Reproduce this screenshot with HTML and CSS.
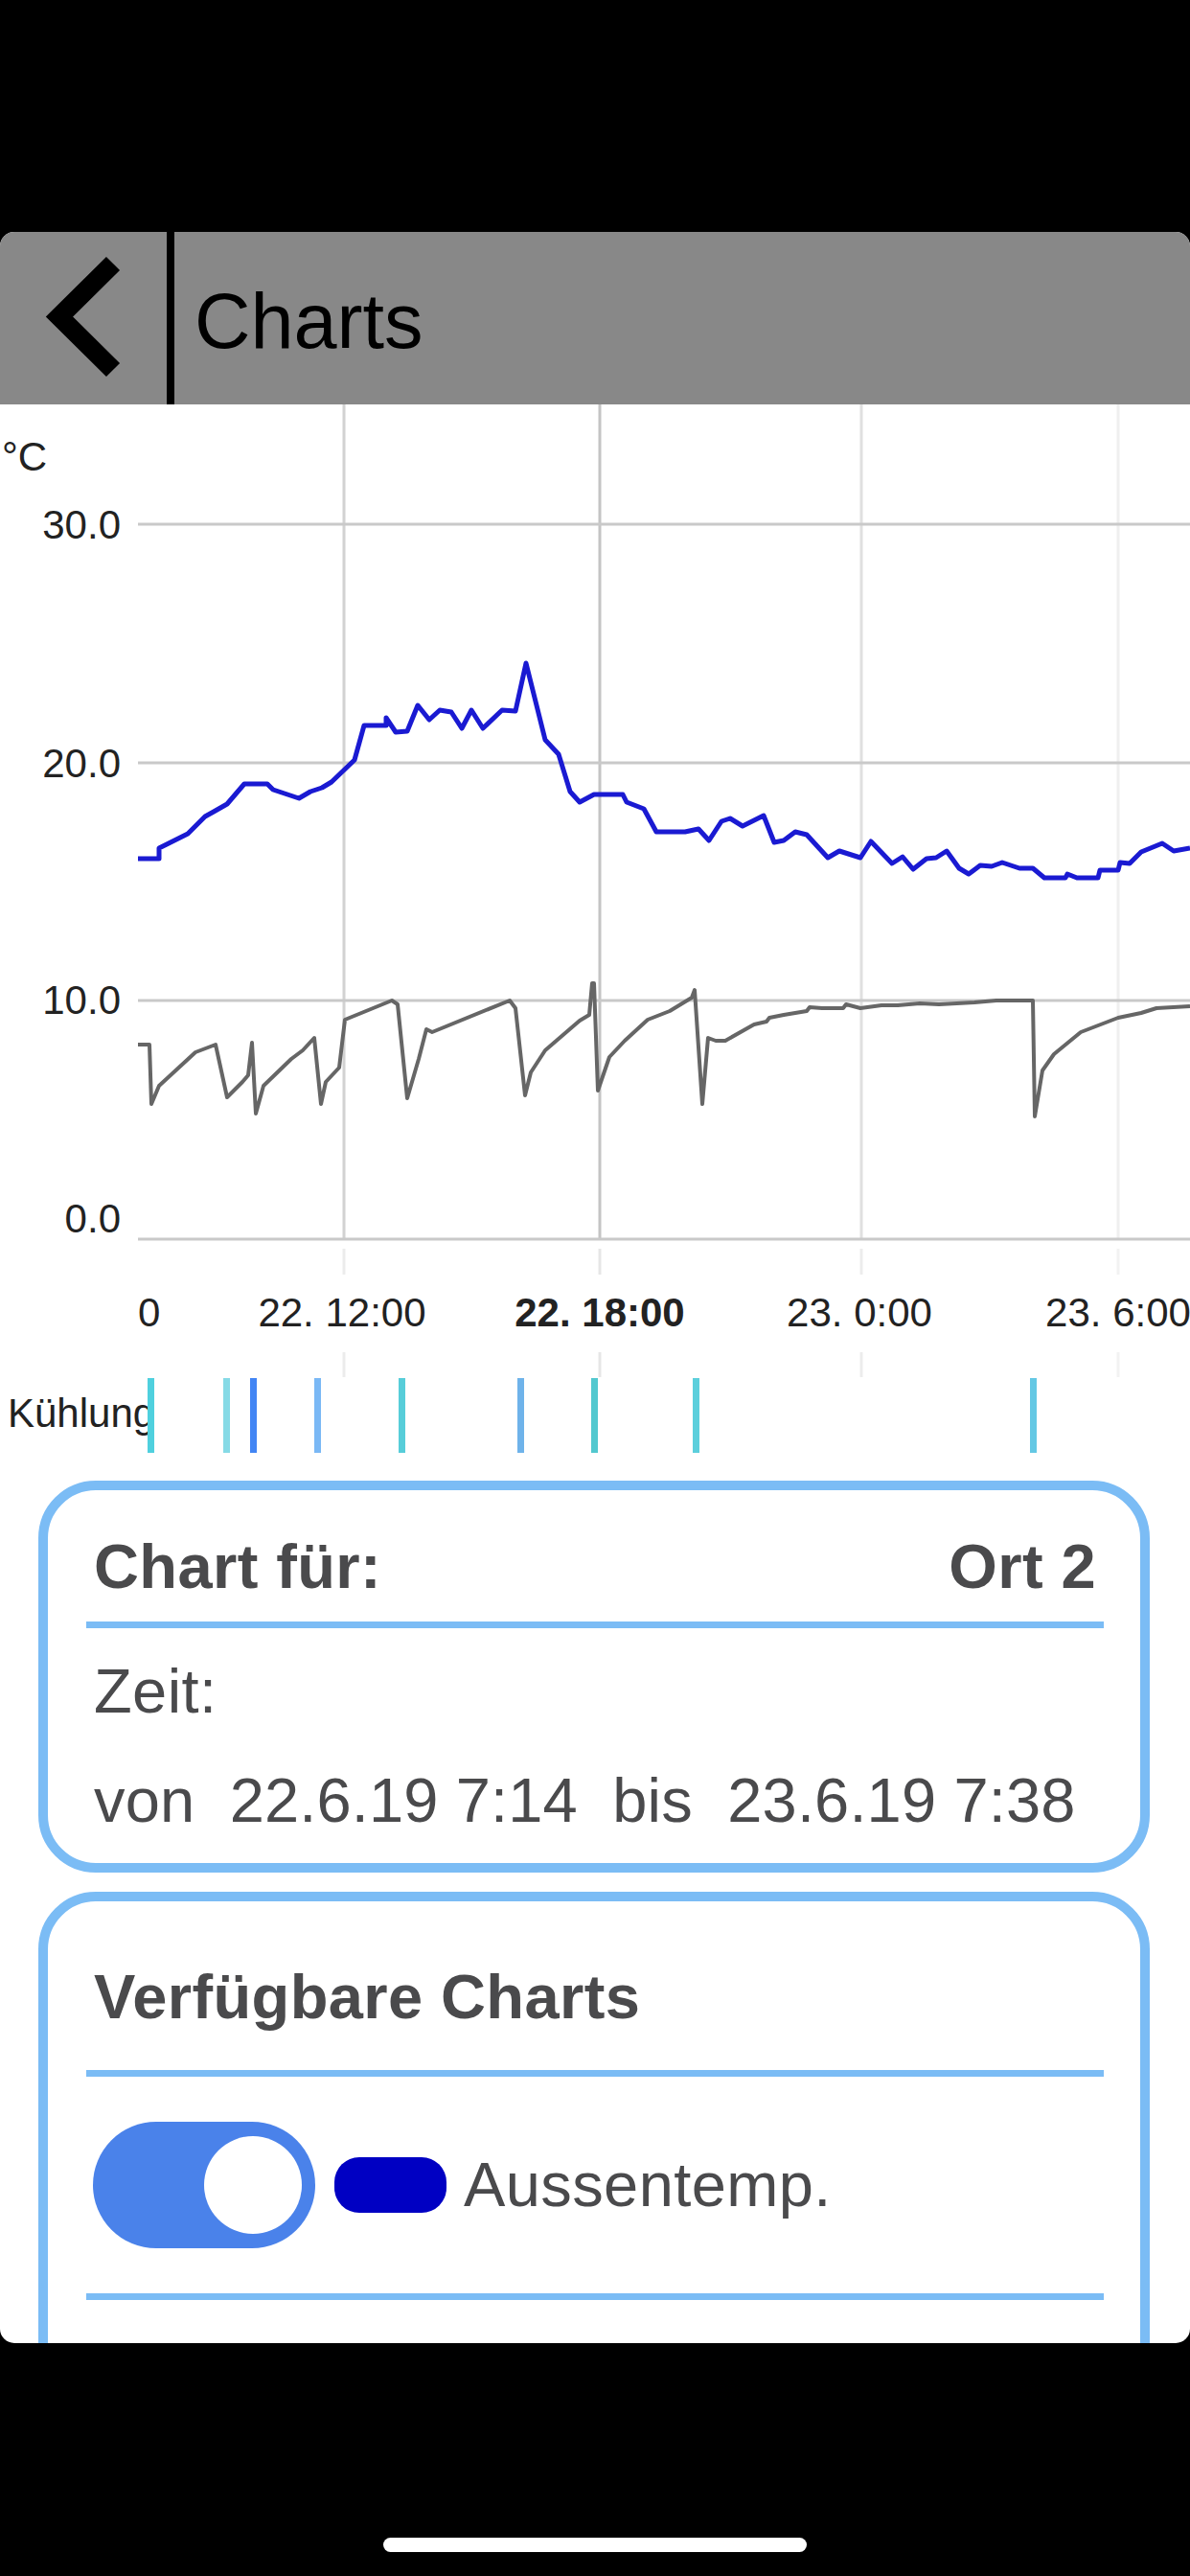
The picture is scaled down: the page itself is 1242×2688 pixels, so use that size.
FILE: index.html
```html
<!DOCTYPE html>
<html lang="de">
<head>
  <meta charset="UTF-8">
  <title>Charts</title>
  <link rel="stylesheet" href="styles.css">
</head>
<body>
  <div class="notch-space"></div>

  <div class="screen">
    <!-- Top bar -->
    <div class="topbar">
      <div class="back">
        <svg width="174" height="180" viewBox="0 0 174 180">
          <polyline points="118,33 62,88.5 118,144" fill="none" stroke="#000" stroke-width="20" stroke-linejoin="miter"/>
        </svg>
      </div>
      <div class="title">Charts</div>
    </div>

    <!-- Chart -->
    <svg class="chart" width="1242" height="1123" viewBox="0 422 1242 1123">
      <g class="grid-v">
        <line x1="359" y1="422" x2="359" y2="1293" stroke="#d2d2d2"/>
        <line x1="626" y1="422" x2="626" y2="1293" stroke="#c4c4c4"/>
        <line x1="899" y1="422" x2="899" y2="1293" stroke="#e0e0e0"/>
        <line x1="1167" y1="422" x2="1167" y2="1293" stroke="#efefef"/>
        <line x1="359" y1="1303" x2="359" y2="1330" stroke="#ececec"/>
        <line x1="626" y1="1303" x2="626" y2="1330" stroke="#e6e6e6"/>
        <line x1="899" y1="1303" x2="899" y2="1330" stroke="#ececec"/>
        <line x1="1167" y1="1303" x2="1167" y2="1330" stroke="#f2f2f2"/>
        <line x1="359" y1="1411" x2="359" y2="1437" stroke="#ececec"/>
        <line x1="626" y1="1411" x2="626" y2="1437" stroke="#e6e6e6"/>
        <line x1="899" y1="1411" x2="899" y2="1437" stroke="#ececec"/>
        <line x1="1167" y1="1411" x2="1167" y2="1437" stroke="#f2f2f2"/>
      </g>
      <g class="grid-h">
        <line x1="144" y1="547" x2="1242" y2="547"/>
        <line x1="144" y1="796" x2="1242" y2="796"/>
        <line x1="144" y1="1044" x2="1242" y2="1044"/>
        <line x1="144" y1="1293" x2="1242" y2="1293"/>
      </g>

      <text class="axis" x="2" y="491">°C</text>
      <text class="axis" x="126" y="562" text-anchor="end">30.0</text>
      <text class="axis" x="126" y="811" text-anchor="end">20.0</text>
      <text class="axis" x="126" y="1058" text-anchor="end">10.0</text>
      <text class="axis" x="126" y="1286" text-anchor="end">0.0</text>

      <polyline class="line-out" points="144,896 166,896 166,885 178,879 196,870 214,852 223,847 237,839 255,818 279,818 285,824 312,833 324,826 336,822 346,816 370,793 380,757 403,757 403,749 413,764 425,763 436,736 448,751 459,741 471,743 482,760 492,741 504,760 524,741 538,742 549,692 569,772 583,787 595,826 605,837 620,829 650,829 654,837 672,844 685,868 715,868 729,865 740,877 753,857 762,854 775,862 797,851 808,879 818,877 830,868 842,871 864,895 876,888 898,895 909,878 931,901 942,894 953,907 967,896 977,895 988,888 1001,906 1011,912 1023,903 1035,904 1046,900 1064,906 1078,906 1090,916 1112,916 1114,912 1124,916 1146,916 1148,908 1167,908 1169,900 1179,901 1191,889 1213,880 1225,888 1242,885"/>

      <polyline class="line-in" points="144,1090 156,1090 158,1152 166,1133 204,1098 225,1090 237,1145 253,1129 259,1122 263,1088 267,1162 275,1133 304,1105 316,1096 328,1083 335,1152 340,1129 354,1114 360,1064 409,1044 415,1048 425,1146 437,1105 445,1074 451,1077 532,1044 538,1052 548,1143 554,1119 569,1096 605,1065 615,1059 618,1026 620,1026 624,1138 636,1103 652,1086 676,1064 699,1055 722,1041 725,1033 733,1152 739,1083 747,1086 757,1086 787,1069 800,1066 803,1062 818,1059 842,1055 845,1051 858,1052 880,1052 883,1048 898,1052 920,1049 937,1049 960,1047 980,1048 1017,1046 1040,1044 1078,1044 1080,1165 1088,1117 1100,1100 1128,1077 1167,1062 1191,1057 1207,1052 1242,1050"/>

      <text class="axis" x="144" y="1384">0</text>
      <text class="axis" x="357" y="1384" text-anchor="middle">22. 12:00</text>
      <text class="axis bold" x="626" y="1384" text-anchor="middle">22. 18:00</text>
      <text class="axis" x="897" y="1384" text-anchor="middle">23. 0:00</text>
      <text class="axis" x="1167" y="1384" text-anchor="middle">23. 6:00</text>

      <text class="axis" x="8" y="1489">Kühlung</text>
      <g class="cool">
        <rect x="154" y="1438" width="7" height="78" fill="#4fd0de"/>
        <rect x="233" y="1438" width="7" height="78" fill="#86dae6"/>
        <rect x="261" y="1438" width="7" height="78" fill="#4285f4"/>
        <rect x="328" y="1438" width="7" height="78" fill="#7ab8f5"/>
        <rect x="416" y="1438" width="7" height="78" fill="#57cdd9"/>
        <rect x="540" y="1438" width="7" height="78" fill="#6fb3ea"/>
        <rect x="617" y="1438" width="7" height="78" fill="#52c8cf"/>
        <rect x="723" y="1438" width="7" height="78" fill="#5ccfdc"/>
        <rect x="1075" y="1438" width="7" height="78" fill="#64c8e4"/>
      </g>
    </svg>

    <!-- Info cards -->
    <div class="cards">
      <div class="card">
        <div class="card-head">
          <span>Chart für:</span>
          <span>Ort 2</span>
        </div>
        <div class="rule"></div>
        <div class="line line-zeit">Zeit:</div>
        <div class="line line-range">von&nbsp; 22.6.19 7:14&nbsp; bis&nbsp; 23.6.19 7:38</div>
      </div>

      <div class="card card-list">
        <div class="card-title">Verfügbare Charts</div>
        <div class="rule"></div>
        <div class="toggle-row">
          <div class="toggle on"><div class="knob"></div></div>
          <div class="swatch swatch-out"></div>
          <span>Aussentemp.</span>
        </div>
        <div class="rule"></div>
      </div>
    </div>
  </div>

  <div class="home-area">
    <div class="home-bar"></div>
  </div>
</body>
</html>
```

FILE: styles.css
```css
body {
  margin: 0;
  padding: 0;
  width: 1242px;
  height: 2688px;
  overflow: hidden;
  background: #000;
  font-family: "Liberation Sans", Arial, sans-serif;
}

.notch-space {
  height: 242px;
}

.screen {
  height: 2203px;
  background: #fff;
  border-radius: 15px;
  overflow: hidden;
}

.topbar {
  height: 180px;
  background: #888;
  display: flex;
}

.back {
  width: 174px;
  border-right: 8px solid #000;
}

.back svg {
  display: block;
}

.title {
  display: flex;
  align-items: center;
  padding: 6px 0 0 21px;
  font-size: 81px;
  color: #000;
}

.chart {
  display: block;
}

.grid-v line {
  stroke-width: 3;
}

.grid-h line {
  stroke: #c9c9c9;
  stroke-width: 3;
}

.axis {
  font-family: "Liberation Sans", Arial, sans-serif;
  font-size: 42px;
  fill: #222;
}

.axis.bold {
  font-weight: bold;
}

.line-out {
  fill: none;
  stroke: #1a1ad2;
  stroke-width: 5;
  stroke-linejoin: round;
}

.line-in {
  fill: none;
  stroke: #666;
  stroke-width: 4;
  stroke-linejoin: round;
}

.cards {
  display: flex;
  flex-direction: column;
  gap: 20px;
  padding: 0 42px 0 40px;
}

.card {
  border: 10px solid #7bbcf5;
  border-radius: 60px;
  padding: 0 38px 0 40px;
  color: #4a4a4c;
  font-size: 65px;
  letter-spacing: 0.4px;
  line-height: 1.2;
}

.card-list {
  padding-bottom: 200px;
}

.card-head {
  display: flex;
  justify-content: space-between;
  padding: 41px 8px 18px;
  font-weight: bold;
}

.rule {
  height: 7px;
  background: #7bbcf5;
}

.line {
  padding: 0 8px;
}

.line-zeit {
  margin-top: 27px;
}

.line-range {
  margin-top: 36px;
  padding-bottom: 26px;
  letter-spacing: 0.15px;
}

.card-title {
  padding: 61px 8px 37px;
  font-weight: bold;
}

.toggle-row {
  display: flex;
  align-items: center;
  padding: 47px 0 47px 7px;
}

.toggle {
  width: 232px;
  height: 132px;
  border-radius: 66px;
  background: #4a82ea;
  display: flex;
  align-items: center;
  justify-content: flex-end;
  padding-right: 14px;
  box-sizing: border-box;
}

.knob {
  width: 102px;
  height: 102px;
  border-radius: 50%;
  background: #fff;
}

.swatch {
  width: 117px;
  height: 58px;
  border-radius: 26px;
  margin: 0 18px 0 20px;
}

.swatch-out {
  background: #0000c3;
}

.home-area {
  height: 243px;
  display: flex;
  justify-content: center;
  align-items: flex-end;
  padding-bottom: 25px;
  box-sizing: border-box;
}

.home-bar {
  width: 442px;
  height: 15px;
  border-radius: 8px;
  background: #fff;
}
```
